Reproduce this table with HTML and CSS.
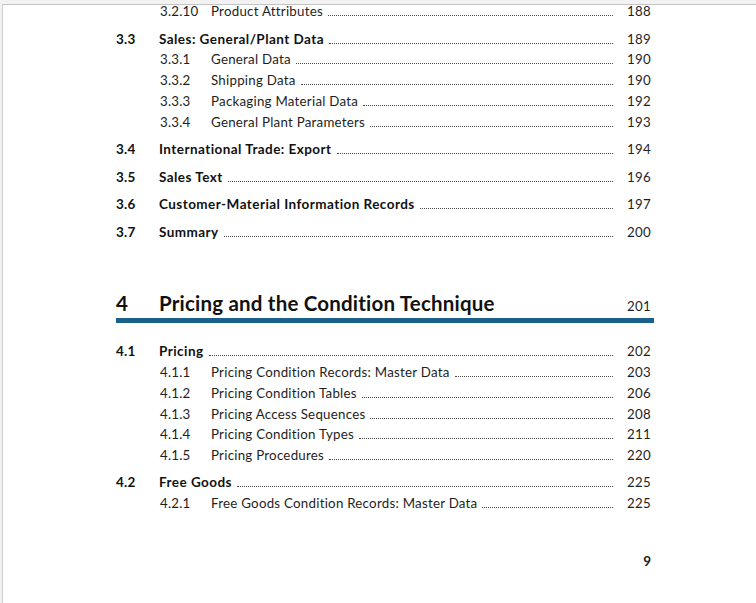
FILE: index.html
```html
<!DOCTYPE html>
<html>
<head>
<meta charset="utf-8">
<link rel="stylesheet" href="styles.css">
</head>
<body>
<div class="page">
  <div class="toc">
    <div class="row sub first"><span class="snum">3.2.10</span><span class="title">Product Attributes</span><span class="leader"></span><span class="pg">188</span></div>
    <div class="row main"><span class="num">3.3</span><span class="title">Sales: General/Plant Data</span><span class="leader"></span><span class="pg">189</span></div>
    <div class="row sub"><span class="snum">3.3.1</span><span class="title">General Data</span><span class="leader"></span><span class="pg">190</span></div>
    <div class="row sub"><span class="snum">3.3.2</span><span class="title">Shipping Data</span><span class="leader"></span><span class="pg">190</span></div>
    <div class="row sub"><span class="snum">3.3.3</span><span class="title">Packaging Material Data</span><span class="leader"></span><span class="pg">192</span></div>
    <div class="row sub"><span class="snum">3.3.4</span><span class="title">General Plant Parameters</span><span class="leader"></span><span class="pg">193</span></div>
    <div class="row main"><span class="num">3.4</span><span class="title">International Trade: Export</span><span class="leader"></span><span class="pg">194</span></div>
    <div class="row main"><span class="num">3.5</span><span class="title">Sales Text</span><span class="leader"></span><span class="pg">196</span></div>
    <div class="row main"><span class="num">3.6</span><span class="title">Customer-Material Information Records</span><span class="leader"></span><span class="pg">197</span></div>
    <div class="row main"><span class="num">3.7</span><span class="title">Summary</span><span class="leader"></span><span class="pg">200</span></div>
  </div>

  <div class="chapter">
    <span class="cnum">4</span><span class="ctitle">Pricing and the Condition Technique</span><span class="cpg">201</span>
  </div>

  <div class="toc second">
    <div class="row main"><span class="num">4.1</span><span class="title">Pricing</span><span class="leader"></span><span class="pg">202</span></div>
    <div class="row sub"><span class="snum">4.1.1</span><span class="title">Pricing Condition Records: Master Data</span><span class="leader"></span><span class="pg">203</span></div>
    <div class="row sub"><span class="snum">4.1.2</span><span class="title">Pricing Condition Tables</span><span class="leader"></span><span class="pg">206</span></div>
    <div class="row sub"><span class="snum">4.1.3</span><span class="title">Pricing Access Sequences</span><span class="leader"></span><span class="pg">208</span></div>
    <div class="row sub"><span class="snum">4.1.4</span><span class="title">Pricing Condition Types</span><span class="leader"></span><span class="pg">211</span></div>
    <div class="row sub"><span class="snum">4.1.5</span><span class="title">Pricing Procedures</span><span class="leader"></span><span class="pg">220</span></div>
    <div class="row main"><span class="num">4.2</span><span class="title">Free Goods</span><span class="leader"></span><span class="pg">225</span></div>
    <div class="row sub"><span class="snum">4.2.1</span><span class="title">Free Goods Condition Records: Master Data</span><span class="leader"></span><span class="pg">225</span></div>
  </div>

  <div class="folio">9</div>
</div>
</body>
</html>
```

FILE: styles.css
```css
html, body {
  margin: 0;
  padding: 0;
}
body {
  background: #f2f2f2;
  font-family: Lato, "Liberation Sans", sans-serif;
  color: #1e1e1e;
  padding: 4px 0 0 2px;
  height: 603px;
  box-sizing: border-box;
  overflow: hidden;
}
.page {
  background: #ffffff;
  border-top: 1px solid #c4c4c4;
  border-left: 1px solid #cfcfcf;
  height: 700px;
  padding: 0 99px 0 113px;
  box-sizing: border-box;
}
.toc {
  width: 538px;
}
.toc:first-child {
  margin-top: -4px;
}
.row {
  display: flex;
  align-items: baseline;
  height: 20.75px;
  line-height: 20.75px;
  font-size: 13.3px;
  letter-spacing: 0.25px;
}
.row.main {
  margin-top: 6.8px;
  font-weight: 700;
  font-size: 13.5px;
  letter-spacing: 0.45px;
  color: #111;
}
.row.first {
  margin-top: 0;
}
.toc.second .row.main {
  margin-top: 6px;
}
.toc.second .row.main:first-child {
  margin-top: 18px;
}
.num {
  width: 43px;
  flex: none;
  letter-spacing: 0.2px;
}
.snum {
  width: 51px;
  margin-left: 44px;
  flex: none;
  letter-spacing: 0.2px;
}
.title {
  flex: none;
  white-space: nowrap;
}
.leader {
  flex: 1;
  height: 0;
  border-bottom: 1px dotted #4a4a4a;
  margin: 0 0 0 5px;
}
.pg {
  flex: none;
  width: 41px;
  text-align: right;
  padding-right: 3px;
  box-sizing: border-box;
  font-weight: 400;
  font-size: 13.3px;
  letter-spacing: 0.25px;
  color: #1e1e1e;
}
.chapter {
  width: 538px;
  margin-top: 46px;
  display: flex;
  align-items: baseline;
  height: 30px;
  line-height: 30px;
  border-bottom: 5px solid #1b5f8b;
  color: #111;
}
.cnum {
  width: 43px;
  flex: none;
  font-size: 20.5px;
  font-weight: 700;
}
.ctitle {
  flex: 1;
  font-size: 20.5px;
  font-weight: 700;
  letter-spacing: 0.2px;
}
.cpg {
  font-size: 13.3px;
  letter-spacing: 0.25px;
  padding-right: 3px;
  color: #1e1e1e;
}
.folio {
  width: 538px;
  text-align: right;
  box-sizing: border-box;
  padding-right: 3px;
  margin-top: 40px;
  font-size: 13.5px;
  font-weight: 700;
}
```
